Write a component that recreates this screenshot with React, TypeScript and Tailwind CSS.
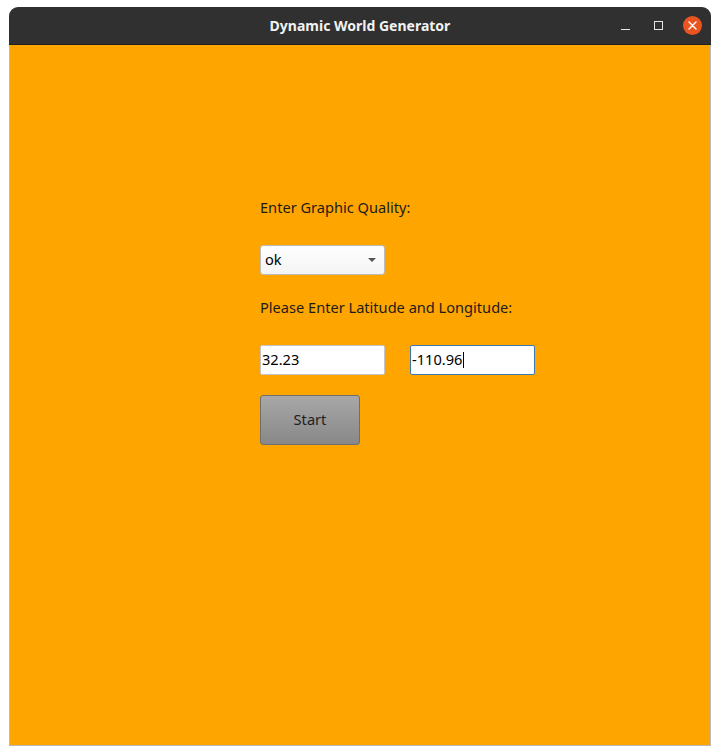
import React from 'react';

/**
 * App
 * - Desktop window mockup for the "Dynamic World Generator" launcher.
 */
const font = { fontFamily: '"Noto Sans", "Open Sans", sans-serif' };

function TitleBar() {
  return (
    <div className="relative flex h-[38px] items-center justify-center rounded-t-[9px] border-b border-[#1f1f1f] bg-[#303030]">
      <span className="text-[14px] font-bold text-[#f2f2f2]">Dynamic World Generator</span>
      <div className="absolute right-[9px] top-0 flex h-full items-center gap-[20px]">
        <span className="mt-[8px] block h-[1px] w-[9px] bg-[#e6e6e6]" />
        <span className="ml-[4px] block h-[9px] w-[9px] border border-[#e6e6e6]" />
        <span className="flex h-[19px] w-[19px] items-center justify-center rounded-full bg-[#e95420]">
          <svg width="9" height="9" viewBox="0 0 9 9">
            <path d="M1 1 L8 8 M8 1 L1 8" stroke="#ffffff" strokeWidth="1.4" strokeLinecap="round" />
          </svg>
        </span>
      </div>
    </div>
  );
}

export default function App() {
  return (
    <div className="h-[755px] w-[720px] bg-white pl-[9px] pt-[7px]" style={font}>
      <div className="flex h-[739px] w-[702px] flex-col">
        <TitleBar />
        <main className="flex-1 border-x border-b border-[#b9b9b9] bg-[#ffa500] pl-[250px] pt-[153px] text-[14.6px] text-[#1c1c1c]">
          <div className="flex h-[20px] items-center">Enter Graphic Quality:</div>

          <div className="mt-[27px] flex h-[30px] w-[125px] items-center justify-between rounded-[3px] border border-[#bcbcbc] bg-gradient-to-b from-white to-[#f4f4f4] pl-[4px] pr-[8px] text-black">
            <span>ok</span>
            <svg width="8" height="4" viewBox="0 0 8 4">
              <path d="M0 0 H8 L4 4 Z" fill="#555555" />
            </svg>
          </div>

          <div className="mt-[23px] flex h-[20px] items-center">Please Enter Latitude and Longitude:</div>

          <div className="mt-[27px] flex gap-[25px]">
            <div className="flex h-[30px] w-[125px] items-center rounded-[2px] border border-[#c4c4c4] bg-white pl-[1px] text-black">
              32.23
            </div>
            <div className="flex h-[30px] w-[125px] items-center rounded-[2px] border border-[#3b78b3] bg-white pl-[1px] text-black">
              -110.96
              <span className="ml-[1px] block h-[16px] w-[1px] bg-black" />
            </div>
          </div>

          <button className="mt-[20px] flex h-[50px] w-[100px] items-center justify-center rounded-[3px] border border-[#6e6e6e] bg-gradient-to-b from-[#a8a8a8] to-[#888888] text-[#1e1e1e]">
            Start
          </button>
        </main>
      </div>
    </div>
  );
}
